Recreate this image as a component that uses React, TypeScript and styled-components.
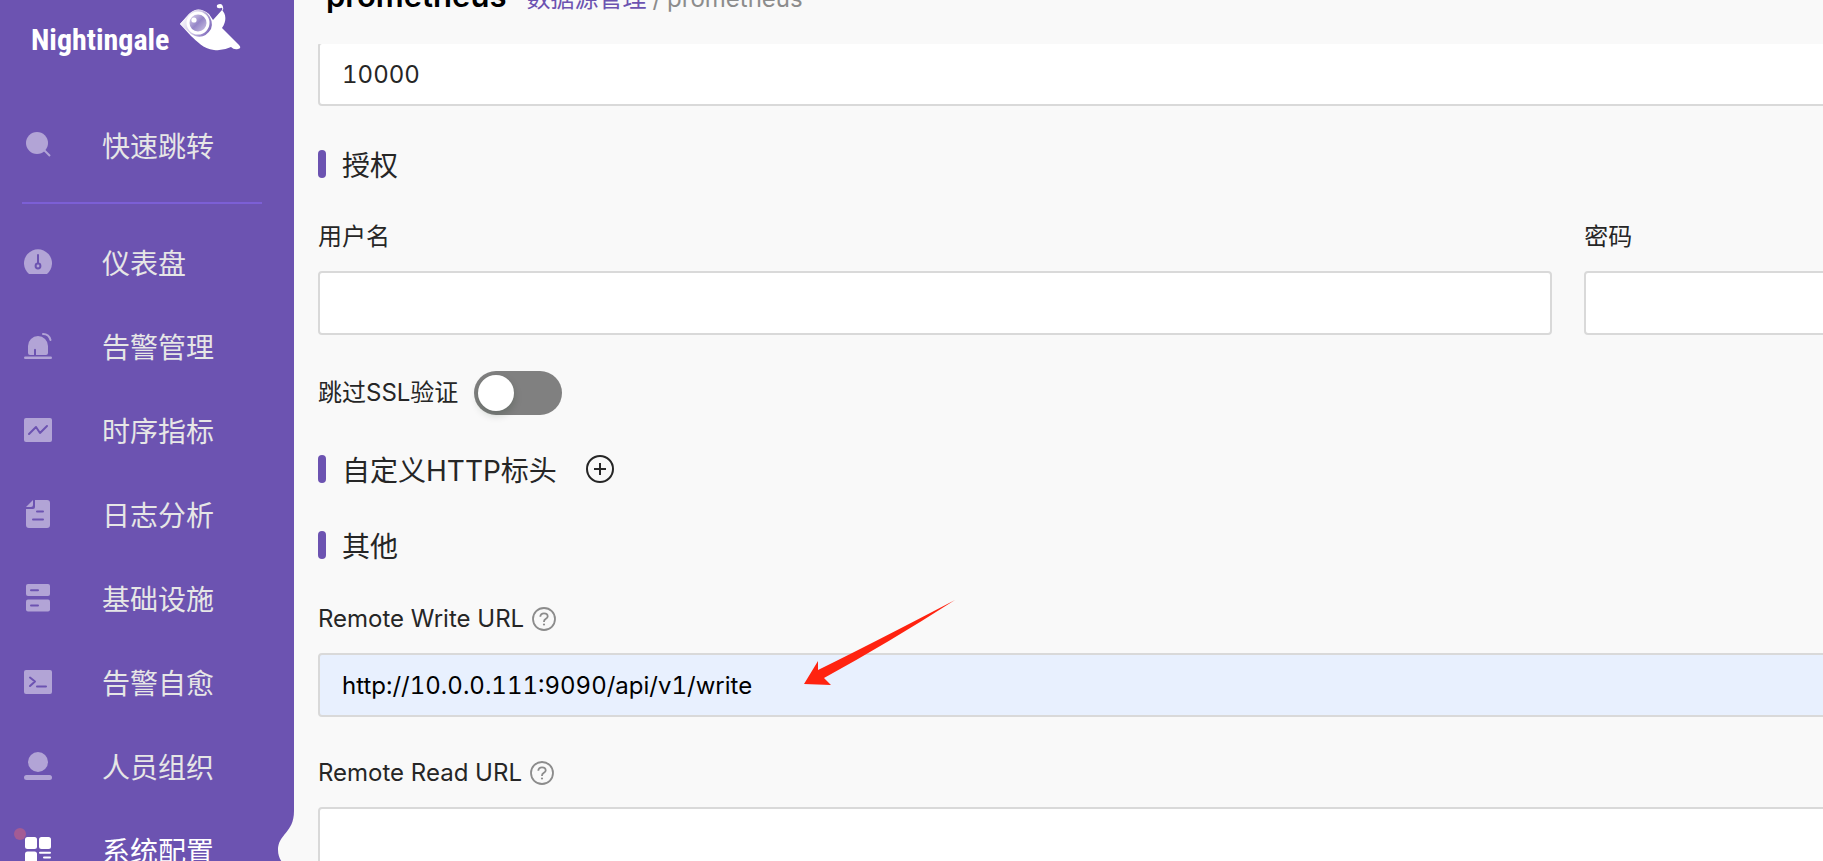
import React from "react";
import styled, { createGlobalStyle } from "styled-components";

const GlobalStyle = createGlobalStyle`
  *, *::before, *::after { box-sizing: border-box; }
  body {
    margin: 0;
    overflow: hidden;
    background: #f9f9f9;
    color: #262626;
    font-family: Inter, "Noto Sans CJK SC", sans-serif;
    font-size: 24px;
  }
`;

const Page = styled.div`
  display: flex;
  height: 100vh;
  overflow: hidden;
`;

const Sidebar = styled.aside`
  flex: 0 0 294px;
  overflow: hidden;
  background: #6c53b1;
  color: #e6e6e6;
`;

const Brand = styled.a`
  display: flex;
  height: 103px;
  padding-left: 31px;
  color: #fff;
  text-decoration: none;
`;

const BrandName = styled.span`
  width: 148px;
  padding-top: 20px;
  font-family: "Liberation Sans Narrow", "Roboto Condensed", Roboto, sans-serif;
  font-size: 30px;
  font-weight: 700;
  line-height: 40px;
`;

const NavDivider = styled.hr`
  height: 2px;
  margin: 15px 32px 16px 22px;
  border: 0;
  background: #7c5fd6;
`;

const NavList = styled.ul`
  margin: 0;
  padding: 0;
  list-style: none;
`;

const NavLink = styled.a<{ $active?: boolean }>`
  position: relative;
  display: flex;
  align-items: center;
  gap: 50px;
  height: 84px;
  padding-left: 24px;
  color: ${(p) => (p.$active ? "#fff" : "#e6e6e6")};
  font-size: 28px;
  line-height: 40px;
  text-decoration: none;

  > svg:first-child {
    flex: none;
    color: ${(p) => (p.$active ? "#fff" : "#b2a4d6")};
  }
`;

const NavText = styled.span`
  padding-top: 3px;
`;

const Notch = styled.svg`
  position: absolute;
  top: 0;
  right: 0;
`;

const AlertDot = styled.span`
  position: absolute;
  top: 20px;
  left: 14px;
  width: 12px;
  height: 12px;
  border-radius: 50%;
  background: #a35b94;
`;

const Main = styled.main`
  display: flex;
  flex: 1;
  flex-direction: column;
  min-width: 0;
`;

const Header = styled.header`
  display: flex;
  flex: none;
  align-items: flex-end;
  gap: 20px;
  height: 44px;
  padding: 0 32px 28px;
`;

const Title = styled.h1`
  margin: 0;
  color: #000;
  font-size: 31px;
  font-weight: 600;
  line-height: 40px;
`;

const Crumbs = styled.nav`
  display: flex;
  gap: 6px;
  color: #8c8c8c;
  line-height: 34px;

  a {
    color: #6c53b1;
    text-decoration: none;
  }
`;

const FormViewport = styled.div`
  flex: 1;
  min-height: 0;
  padding-left: 24px;
  overflow: hidden;
`;

const Form = styled.form`
  width: calc(166% + 2px);
  margin-top: -2px;
`;

const TextBox = styled.input<{ $filled?: boolean }>`
  display: block;
  width: 100%;
  height: 64px;
  padding: 0 22px;
  border: 2px solid #d9d9d9;
  border-radius: 4px;
  outline: 0;
  background: ${(p) => (p.$filled ? "#e8f0fe" : "#fff")};
  color: ${(p) => (p.$filled ? "#000" : "#262626")};
  font: inherit;
  font-variant-numeric: tabular-nums;
`;

const SectionTitle = styled.h2`
  display: flex;
  align-items: center;
  height: 44px;
  margin: 0;
  font-size: 28px;
  font-weight: 400;
  line-height: 40px;

  &::before {
    width: 8px;
    height: 28px;
    margin-right: 16px;
    border-radius: 4px;
    background: #6c53b1;
    content: "";
  }
`;

const TitleText = styled.span`
  padding-top: 4px;
`;

const Section = styled.section`
  margin-top: 32px;
`;

const AuthSection = styled.section`
  margin-top: 36px;
`;

const AddButton = styled.button`
  display: flex;
  margin-left: 29px;
  padding: 0;
  border: 0;
  background: none;
  color: #262626;
`;

const FieldRow = styled.div`
  display: grid;
  grid-template-columns: 1fr 1fr;
  gap: 32px;
  margin-top: 35px;
`;

const FieldStack = styled.div`
  display: flex;
  flex-direction: column;
  gap: 40px;
  margin-top: 36px;
`;

const Field = styled.div``;

const FieldLabel = styled.label`
  display: flex;
  align-items: center;
  gap: 8px;
  height: 32px;
  margin-bottom: 18px;
  line-height: 32px;
`;

const SwitchRow = styled.label`
  display: flex;
  align-items: center;
  gap: 16px;
  width: max-content;
  height: 44px;
  margin: 36px 0 32px;
  line-height: 32px;
`;

const Switch = styled.input`
  width: 88px;
  height: 44px;
  margin: 0;
  padding: 4px;
  border-radius: 22px;
  appearance: none;
  background: #808080;

  &::before {
    display: block;
    width: 36px;
    height: 36px;
    border-radius: 50%;
    background: #fff;
    box-shadow: 0 4px 8px rgba(0, 35, 11, 0.2);
    content: "";
  }

  &:checked {
    background: #6c53b1;
  }

  &:checked::before {
    margin-left: auto;
  }
`;

const Arrow = styled.svg`
  position: absolute;
  top: 599px;
  left: 803px;
  pointer-events: none;
`;

const CUT = "#6c53b1";

const BirdLogo = () => (
  <svg width="64" height="56" viewBox="0 0 64 56" aria-hidden="true">
    <defs>
      <linearGradient id="ring" x1="0" y1="0.3" x2="1" y2="0.7">
        <stop offset="0" stopColor="#fff" />
        <stop offset="0.5" stopColor="#cfc6e6" />
        <stop offset="1" stopColor="#7a64b9" />
      </linearGradient>
      <linearGradient id="pupil" x1="0.1" y1="0.1" x2="0.9" y2="0.9">
        <stop offset="0" stopColor="#d9d2ec" />
        <stop offset="0.5" stopColor="#9585c7" />
        <stop offset="1" stopColor="#cbc2e3" />
      </linearGradient>
    </defs>
    <path
      fill="#fff"
      d="M1 24 L10 14 Q19 5 30 14 L34 20 L43 10 C47 14 48 21 43 28 L60 45 Q63 48 59 49 Q55 50 52 47 Q44 51 35 50 C24 49 18 41 12 36 Z"
    />
    <path fill="#fff" d="M43 10 Q44 7 42 8 Q37 9 38 5 Q43 2 44 7 Q45 9 43 11 Z" />
    <path fill="url(#ring)" d="M1 24 L10 14 Q19 6 28 13 Q35 21 32 29 Q26 39 16 36 Q12 35 9 31 Z" />
    <circle cx="19" cy="23" r="11" fill="#7e69bc" fillOpacity="0.35" />
    <circle cx="19" cy="23" r="10" fill="url(#pupil)" stroke="#fff" strokeWidth="3" />
    <circle cx="15" cy="20" r="2.6" fill="#fff" />
  </svg>
);

const NavIcon = ({ children }: { children: React.ReactNode }) => (
  <svg width="28" height="28" viewBox="0 0 28 28" fill="currentColor" aria-hidden="true">
    {children}
  </svg>
);

const cut = {
  fill: "none",
  stroke: CUT,
  strokeWidth: 2,
  strokeLinecap: "round" as const,
  strokeLinejoin: "round" as const,
};

const SearchIcon = () => (
  <NavIcon>
    <circle cx="13" cy="12" r="11" />
    <path d="M19 18L26 25" stroke="currentColor" strokeWidth="2" />
  </NavIcon>
);

const GaugeIcon = () => (
  <NavIcon>
    <path d="M5 26 A14 14 0 1 1 23 26 Z" />
    <path {...cut} d="M14 7V15" />
    <circle {...cut} cx="14" cy="18" r="2.4" />
  </NavIcon>
);

const AlarmIcon = () => (
  <NavIcon>
    <path d="M4 21V14a10 10 0 0 1 20 0V21a2 2 0 0 1-2 2H12V17.5a1.2 1.2 0 0 0-2 0V23H6a2 2 0 0 1-2-2Z" />
    <rect y="24.500" width="28" height="2.600" rx="1.300" />
    <path d="M19 2Q25 2 26.500 8" fill="none" stroke="currentColor" strokeWidth="2" strokeLinecap="round" />
  </NavIcon>
);

const MetricIcon = () => (
  <NavIcon>
    <rect y="2" width="28" height="24" rx="2" />
    <path {...cut} d="M5 18L12 11L16 17L23 10" />
  </NavIcon>
);

const LogIcon = () => (
  <NavIcon>
    <path d="M11 0H23a3 3 0 0 1 3 3V25a3 3 0 0 1-3 3H5a3 3 0 0 1-3-3V9H9a2 2 0 0 0 2-2Z" />
    <path d="M9 0V5a2 2 0 0 1-2 2H2Z" />
    <path {...cut} d="M13 11.500H19M9 19.500H19" />
  </NavIcon>
);

const ServerIcon = () => (
  <NavIcon>
    <rect x="2" width="24" height="12" rx="2" />
    <rect x="2" y="15.500" width="24" height="12" rx="2" />
    <path {...cut} d="M7 6.200H14M7 21.500H14" />
  </NavIcon>
);

const TerminalIcon = () => (
  <NavIcon>
    <rect y="2" width="28" height="24" rx="2" />
    <path {...cut} d="M6 9.500L11 13.500L6 18M13 18.500H22" />
  </NavIcon>
);

const PeopleIcon = () => (
  <NavIcon>
    <circle cx="14" cy="10" r="10" />
    <rect y="23" width="28" height="5" rx="2.500" />
  </NavIcon>
);

const SettingsIcon = () => (
  <NavIcon>
    <rect x="1" y="1" width="12" height="12" rx="2.500" />
    <rect x="15" y="1" width="12" height="12" rx="2.500" />
    <rect x="1" y="15.500" width="12" height="12" rx="2.500" />
    <path d="M16 16.800H26M20 21.500H26M16 26H26" stroke="currentColor" strokeWidth="2" strokeLinecap="round" />
  </NavIcon>
);

const HelpIcon = () => (
  <svg width="24" height="24" viewBox="0 0 24 24" fill="none" stroke="#8c8c8c" strokeWidth="1.800" role="img" aria-label="help">
    <circle cx="12" cy="12" r="11" />
    <path d="M8.300 9.800C8.300 7.600 9.900 6.400 12 6.400S15.700 7.700 15.700 9.500C15.700 11.900 12 11.800 12 14.400V14.900" />
    <circle cx="12" cy="17.500" r="1.100" fill="#8c8c8c" stroke="none" />
  </svg>
);

const PlusCircleIcon = () => (
  <svg width="28" height="28" viewBox="0 0 28 28" fill="none" stroke="currentColor" strokeWidth="2" aria-hidden="true">
    <circle cx="14" cy="14" r="13" />
    <path d="M14 8V20M8 14H20" />
  </svg>
);

const navItems = [
  { label: "仪表盘", Icon: GaugeIcon },
  { label: "告警管理", Icon: AlarmIcon },
  { label: "时序指标", Icon: MetricIcon },
  { label: "日志分析", Icon: LogIcon },
  { label: "基础设施", Icon: ServerIcon },
  { label: "告警自愈", Icon: TerminalIcon },
  { label: "人员组织", Icon: PeopleIcon },
  { label: "系统配置", Icon: SettingsIcon, active: true },
];

export default function App() {
  return (
    <Page>
      <GlobalStyle />
      <Sidebar>
        <Brand href="#home">
          <BrandName>Nightingale</BrandName>
          <BirdLogo />
        </Brand>
        <nav>
          <NavLink href="#search">
            <SearchIcon />
            <NavText>快速跳转</NavText>
          </NavLink>
          <NavDivider />
          <NavList>
            {navItems.map(({ label, Icon, active }) => (
              <li key={label}>
                <NavLink href={`#${label}`} $active={active}>
                  <Icon />
                  <NavText>{label}</NavText>
                  {active && (
                    <>
                      <AlertDot />
                      <Notch width="16" height="84" viewBox="0 0 16 84" aria-hidden="true">
                        <path
                          fill="#f9f9f9"
                          d="M16 3C16 25 0 26 0 42C0 58 16 59 16 81Z"
                        />
                      </Notch>
                    </>
                  )}
                </NavLink>
              </li>
            ))}
          </NavList>
        </nav>
      </Sidebar>

      <Main>
        <Header>
          <Title>prometheus</Title>
          <Crumbs aria-label="breadcrumb">
            <a href="#datasource">数据源管理</a>
            <span>/</span>
            <span>prometheus</span>
          </Crumbs>
        </Header>

        <FormViewport>
          <Form>
            <TextBox aria-label="timeout" defaultValue="10000" />

            <AuthSection>
              <SectionTitle>
                <TitleText>授权</TitleText>
              </SectionTitle>
              <FieldRow>
                <Field>
                  <FieldLabel htmlFor="username">用户名</FieldLabel>
                  <TextBox id="username" />
                </Field>
                <Field>
                  <FieldLabel htmlFor="password">密码</FieldLabel>
                  <TextBox id="password" type="password" />
                </Field>
              </FieldRow>
              <SwitchRow>
                跳过SSL验证
                <Switch type="checkbox" role="switch" />
              </SwitchRow>
            </AuthSection>

            <SectionTitle>
              <TitleText>自定义HTTP标头</TitleText>
              <AddButton type="button" aria-label="add">
                <PlusCircleIcon />
              </AddButton>
            </SectionTitle>

            <Section>
              <SectionTitle>
                <TitleText>其他</TitleText>
              </SectionTitle>
              <FieldStack>
                <Field>
                  <FieldLabel htmlFor="write-url">
                    Remote Write URL
                    <HelpIcon />
                  </FieldLabel>
                  <TextBox id="write-url" $filled defaultValue="http://10.0.0.111:9090/api/v1/write" />
                </Field>
                <Field>
                  <FieldLabel htmlFor="read-url">
                    Remote Read URL
                    <HelpIcon />
                  </FieldLabel>
                  <TextBox id="read-url" />
                </Field>
              </FieldStack>
            </Section>
          </Form>
        </FormViewport>
      </Main>

      <Arrow width="153" height="88" viewBox="0 0 153 88" aria-hidden="true">
        <path fill="#ff2310" d="M1 85L15 62L15 71Q70 44 152 1Q85 44 21 79L28 86Z" />
      </Arrow>
    </Page>
  );
}
